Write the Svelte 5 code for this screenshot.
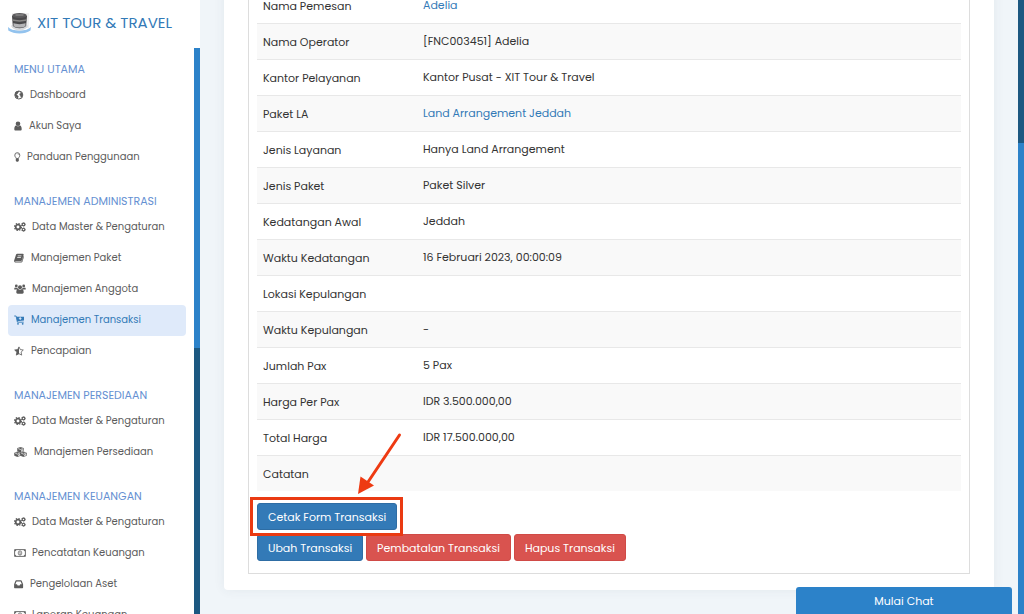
<script>
  const menu = [
    {
      title: 'MENU UTAMA',
      items: [
        { icon: 'globe', label: 'Dashboard' },
        { icon: 'user', label: 'Akun Saya' },
        { icon: 'bulb', label: 'Panduan Penggunaan' }
      ]
    },
    {
      title: 'MANAJEMEN ADMINISTRASI',
      items: [
        { icon: 'cogs', label: 'Data Master & Pengaturan' },
        { icon: 'book', label: 'Manajemen Paket' },
        { icon: 'users', label: 'Manajemen Anggota' },
        { icon: 'cart', label: 'Manajemen Transaksi', active: true },
        { icon: 'star', label: 'Pencapaian' }
      ]
    },
    {
      title: 'MANAJEMEN PERSEDIAAN',
      items: [
        { icon: 'cogs', label: 'Data Master & Pengaturan' },
        { icon: 'cubes', label: 'Manajemen Persediaan' }
      ]
    },
    {
      title: 'MANAJEMEN KEUANGAN',
      items: [
        { icon: 'cogs', label: 'Data Master & Pengaturan' },
        { icon: 'money', label: 'Pencatatan Keuangan' },
        { icon: 'inbox', label: 'Pengelolaan Aset' },
        { icon: 'money', label: 'Laporan Keuangan' }
      ]
    }
  ];

  const iconWidth = {
    globe: 10, user: 9, bulb: 7, cogs: 12, book: 11, users: 12,
    cart: 11, star: 11, cubes: 14, money: 12, inbox: 10
  };

  const rows = [
    { label: 'Nama Pemesan', value: 'Adelia', link: true },
    { label: 'Nama Operator', value: '[FNC003451] Adelia' },
    { label: 'Kantor Pelayanan', value: 'Kantor Pusat - XIT Tour & Travel' },
    { label: 'Paket LA', value: 'Land Arrangement Jeddah', link: true },
    { label: 'Jenis Layanan', value: 'Hanya Land Arrangement' },
    { label: 'Jenis Paket', value: 'Paket Silver' },
    { label: 'Kedatangan Awal', value: 'Jeddah' },
    { label: 'Waktu Kedatangan', value: '16 Februari 2023, 00:00:09' },
    { label: 'Lokasi Kepulangan', value: '' },
    { label: 'Waktu Kepulangan', value: '-' },
    { label: 'Jumlah Pax', value: '5 Pax' },
    { label: 'Harga Per Pax', value: 'IDR 3.500.000,00' },
    { label: 'Total Harga', value: 'IDR 17.500.000,00' },
    { label: 'Catatan', value: '' }
  ];
</script>

{#snippet glyph(name)}
  <svg class="icon" width={iconWidth[name]} height="10" viewBox="0 0 {iconWidth[name]} 10" aria-hidden="true">
    {#if name === 'globe'}
      <circle cx="4.8" cy="5" r="4" fill="none" stroke="currentColor" />
      <path d="M1 3.4 2.8 1.2 5 .9 5.2 2 4 2.8 3.6 4 2.4 4.5 3.8 5.4 4.6 6.4 3.8 8.6 2.2 7.6 1 5.6zM6 1.6 8 2.8 8.8 5 7.6 7.4 6.6 7.2 6.4 5.8 5.4 5 5.6 3.6 6.8 3.2z" fill="currentColor" />
    {:else if name === 'user'}
      <circle cx="4" cy="2.7" r="2.3" fill="currentColor" />
      <path d="M.3 8.2C.3 6.2.9 4.8 2.1 4.6a2.9 2.9 0 0 0 3.8 0c1.2.2 1.8 1.6 1.8 3.6 0 .9-.5 1.4-1.2 1.4h-5C.8 9.6.3 9.1.3 8.2z" fill="currentColor" />
    {:else if name === 'bulb'}
      <path d="M2.1 6.5C2.1 5.3.8 5 .8 3.2a2.5 2.5 0 0 1 5 0c0 1.8-1.3 2.1-1.3 3.3z" fill="none" stroke="currentColor" stroke-width=".9" />
      <path d="M1.8 6.9h3v2l-1 .9h-1l-1-.9zM3.2 1.7c.8 0 1.4.5 1.4 1.2h-.4c0-.5-.4-.8-1-.8z" fill="currentColor" />
    {:else if name === 'cogs'}
      <circle cx="4" cy="5" r="2.3" fill="none" stroke="currentColor" stroke-width="1.7" />
      <circle cx="4" cy="5" r="3.5" fill="none" stroke="currentColor" stroke-width="1.1" stroke-dasharray="1.45 1.3" />
      <circle cx="9.5" cy="2.4" r="1.3" fill="none" stroke="currentColor" stroke-width="1.1" />
      <circle cx="9.5" cy="2.4" r="2" fill="none" stroke="currentColor" stroke-width=".6" stroke-dasharray="1 1.1" />
      <circle cx="9.5" cy="7.6" r="1.3" fill="none" stroke="currentColor" stroke-width="1.1" />
      <circle cx="9.5" cy="7.6" r="2" fill="none" stroke="currentColor" stroke-width=".6" stroke-dasharray="1 1.1" />
    {:else if name === 'book'}
      <path fill-rule="evenodd" d="M3.3.8h5.4c.8 0 1.1.5.9 1.2L8.1 7.1c-.2.6-.6.9-1.2.9H1.6c-.5 0-.5.6.1.6h5.6c.4 0 .6-.2.7-.5l1.600-5.200c.5.300.4.700.300 1.100L8.500 8.400c-.2.700-.7 1.100-1.300 1.100H1.700C.5 9.500-.2 8.400.2 7.300L1.900 2C2.100 1.200 2.600.8 3.300.8zM3.800 2.500 3.600 3.200H7.300L7.500 2.500zM3.300 4.100 3.100 4.800H6.800L7 4.100z" fill="currentColor" />
    {:else if name === 'users'}
      <circle cx="2.3" cy="1.9" r="1.4" fill="currentColor" />
      <circle cx="9.7" cy="1.9" r="1.4" fill="currentColor" />
      <circle cx="6" cy="3.2" r="2" fill="currentColor" />
      <path d="M.2 5.400C.2 4.200.5 3.300 1.200 3.400c.8.5 1.500.5 2.300.1.100 1 .4 1.500.8 1.900H.8zM11.800 5.400c0-1.200-.3-2.100-1-2-.8.5-1.500.5-2.300.1-.1 1-.4 1.500-.8 1.900h3.500zM2.300 8.300c0-1.800.5-3.100 1.900-3.300a2.700 2.700 0 0 0 3.600 0c1.400.2 1.900 1.500 1.900 3.300 0 .9-.5 1.400-1.300 1.400H3.600c-.8 0-1.300-.5-1.300-1.400z" fill="currentColor" />
    {:else if name === 'cart'}
      <path d="M.6 1h1.500l1.300 6.200h5.900" fill="none" stroke="currentColor" stroke-width=".9" stroke-linecap="round" stroke-linejoin="round" />
      <path fill-rule="evenodd" d="M2.300 1.700H10v3.800L3.200 6.300zM5.600 2.300v1H4.500L6.200 5l1.700-1.700H6.800v-1z" fill="currentColor" />
      <circle cx="4" cy="8.8" r=".9" fill="currentColor" />
      <circle cx="8.7" cy="8.8" r=".9" fill="currentColor" />
    {:else if name === 'star'}
      <path d="M5 .9 6.300 3.600l3 .4-2.200 2.100.6 3L5 7.700 2.300 9.100l.6-3L.7 4l3-.4z" fill="none" stroke="currentColor" stroke-width=".8" stroke-linejoin="round" />
      <path d="M5 .9v6.800L2.300 9.100l.6-3L.7 4l3-.4z" fill="currentColor" />
    {:else if name === 'cubes'}
      <g fill="currentColor" stroke="currentColor" stroke-width=".5" stroke-linejoin="round">
        <path d="M3.500 1.300 6.500.3l3 1v2.900l-3 1.200-3-1.200zM.5 5.900l3-1 3 1v2.600l-3 1.200-3-1.200zM6.500 5.900l3-1 3 1v2.600l-3 1.200-3-1.200z" />
      </g>
      <path d="M4.200 1.600 6.500 2.500 8.800 1.600M1.200 6.200l2.300.9 2.300-.9M7.200 6.200l2.300.9 2.300-.9M7.500 3.300 8.900 2.700V3.800l-1.400.6zM4.500 7.900l1.300-.5V8.200l-1.300.5zM10.500 7.900l1.300-.5V8.200l-1.300.5z" fill="none" stroke="#fff" stroke-width=".7" />
    {:else if name === 'money'}
      <path d="M.6 1.600h10.800v6.800H.6z" fill="none" stroke="currentColor" stroke-width=".9" />
      <path d="M1 2h1.500L1 3.500zM11 2H9.500L11 3.500zM1 8h1.500L1 6.500zM11 8H9.500L11 6.500z" fill="currentColor" />
      <ellipse cx="6" cy="5" rx="1.8" ry="2.2" fill="none" stroke="currentColor" stroke-width=".7" />
      <path d="M5.300 4.200 6.100 3.700v2.500M5.300 6.300h1.500" fill="none" stroke="currentColor" stroke-width=".6" />
    {:else if name === 'inbox'}
      <path fill-rule="evenodd" d="M2.200 1.200h4.800c.4 0 .6.200.7.500L9.100 5.300v3.300c0 .4-.2.600-.6.600H.7c-.4 0-.6-.2-.6-.6V5.300L1.500 1.700c.1-.3.3-.5.7-.5zM2.500 2.400 1.400 5.300H3l.6 1.200h2L6.200 5.300h1.600L6.700 2.400z" fill="currentColor" />
    {/if}
  </svg>
{/snippet}

<div class="shell">
  <aside class="sidebar">
    <a class="brand" href="#home">
      <svg width="24" height="22" viewBox="0 0 24 22" aria-hidden="true">
        <path d="M4 1h17v15H4z" fill="#f1f0f0" />
        <path d="M0 15C2 17.500 6 18.500 11.500 18.500S20.500 17.500 23 15l-.5 3.500C19.500 20.500 16 21.500 11.500 21.500S3.500 20.500.3 18.500z" fill="#93c3ee" />
        <path d="M3 13.500C4 17 8 18.500 11.500 18.500S19 17 20 13.500z" fill="#d8dadd" />
        <path d="M4 4 4.800 13.500c1.500 3.500 11.900 3.500 13.400 0L19 4z" fill="#4a494b" />
        <ellipse cx="11.500" cy="3.500" rx="7.300" ry="2.600" fill="#5c5b5d" />
        <path d="M4.300 7c3.500 1.500 11 1.500 14.400 0v1.500c-3.500 1.500-11 1.500-14.300 0z" fill="#8b8987" />
        <path d="M5.500 11c2.500 1.500 9.500 1.500 12 0v3c-2.500 2-9.500 2-12 0z" fill="#b5b5b7" />
        <path d="M7.500 3h8" stroke="#999" />
      </svg>
      <span>XIT TOUR &amp; TRAVEL</span>
    </a>
    <div class="scroller">
      <nav aria-label="Menu">
        {#each menu as group}
          <section>
            <h2>{group.title}</h2>
            <ul>
              {#each group.items as item}
                <li>
                  <a href="#menu" class:active={item.active}>
                    {@render glyph(item.icon)}
                    <span>{item.label}</span>
                  </a>
                </li>
              {/each}
            </ul>
          </section>
        {/each}
      </nav>
      <div class="rail"><div class="thumb side-thumb"></div></div>
    </div>
  </aside>

  <main>
    <div class="card">
      <div class="panel">
        <table>
          <tbody>
            {#each rows as row}
              <tr>
                <th scope="row">{row.label}</th>
                <td>
                  {#if row.link}<a href="#detail">{row.value}</a>{:else}{row.value}{/if}
                </td>
              </tr>
            {/each}
          </tbody>
        </table>
        <div class="actions">
          <div class="line">
            <div class="marked">
              <button class="btn primary">Cetak Form Transaksi</button>
              <div class="frame"></div>
              <svg class="arrow" width="48" height="64" viewBox="0 0 48 64" aria-hidden="true">
                <path d="M43.500 4 12 51" stroke="#ee3a12" stroke-width="3" stroke-linecap="round" />
                <path d="M2 63 4.500 45.500 18 54.500z" fill="#ee3a12" />
              </svg>
            </div>
          </div>
          <div class="line">
            <button class="btn primary">Ubah Transaksi</button>
            <button class="btn danger">Pembatalan Transaksi</button>
            <button class="btn danger">Hapus Transaksi</button>
          </div>
        </div>
      </div>
    </div>
    <button class="chat">Mulai Chat</button>
  </main>

  <div class="rail page-rail"><div class="thumb"></div></div>
</div>

<style>
  :global(body) {
    margin: 0;
  }
  .shell {
    display: grid;
    grid-template-columns: 200px 1fr 6px;
    height: 100vh;
    overflow: hidden;
    background: #f0f5f9;
    color: #333;
    font: 11px/18px Poppins, Inter, sans-serif;
  }
  a {
    color: #337ab7;
    text-decoration: none;
  }
  .sidebar {
    display: flex;
    flex-direction: column;
    min-height: 0;
    background: #fff;
  }
  .brand {
    display: flex;
    flex: none;
    align-items: center;
    gap: 5px;
    height: 45px;
    padding: 0 8px;
    margin-bottom: 3px;
    font-size: 15px;
    white-space: nowrap;
  }
  .scroller {
    display: flex;
    flex: 1;
    min-height: 0;
  }
  nav {
    flex: 1;
    min-width: 0;
    padding: 10px 8px 0;
    overflow: hidden;
  }
  section {
    margin-bottom: 17px;
  }
  h2 {
    margin: 0;
    padding-left: 6px;
    color: #6590d2;
    font-size: 11px;
    font-weight: 400;
    line-height: 22px;
    white-space: nowrap;
  }
  ul {
    margin: 0;
    padding: 0;
    list-style: none;
  }
  li a {
    display: flex;
    align-items: center;
    gap: 6px;
    height: 29px;
    padding: 0 0 2px 6px;
    border-radius: 4px;
    color: #5c5c5c;
    font-size: 10px;
    white-space: nowrap;
  }
  li a.active {
    background: #dfeafa;
    color: #337ab7;
  }
  .icon {
    flex: none;
  }
  .rail {
    flex: none;
    width: 6px;
    background: #1c5881;
  }
  .thumb {
    height: 100%;
    background: #2c82c9;
  }
  .side-thumb {
    height: 53%;
  }
  .page-rail {
    padding-top: 143px;
  }
  main {
    position: relative;
    min-width: 0;
    padding: 0 24px;
  }
  .card {
    margin-top: -13px;
    padding: 0 24px 16px;
    border-radius: 4px;
    background: #fff;
    box-shadow: 0 0 12px rgba(60, 70, 90, 0.07);
  }
  .panel {
    padding: 0 8px 12px;
    border: 1px solid #ddd;
    border-top: 0;
  }
  table {
    width: 100%;
    border-collapse: separate;
    border-spacing: 0;
    table-layout: fixed;
  }
  th,
  td {
    height: 35px;
    padding: 0 6px;
    border-top: 1px solid #e8e8e8;
    font-weight: 400;
    text-align: left;
  }
  th {
    width: 148px;
  }
  td {
    height: 33px;
    padding-bottom: 2px;
  }
  tr:nth-child(even) {
    background: #f9f9f9;
  }
  .actions {
    display: grid;
    gap: 4px;
    padding-top: 12px;
  }
  .line {
    display: flex;
    gap: 3px;
  }
  .btn {
    height: 27px;
    padding: 0 10px;
    border: 1px solid #2e6da4;
    border-radius: 3px;
    background: #337ab7;
    color: #fff;
    font: inherit;
    white-space: nowrap;
  }
  .danger {
    border-color: #d04a46;
    background: #d9534f;
  }
  .marked {
    position: relative;
    z-index: 1;
  }
  .marked .btn {
    display: block;
  }
  .frame {
    position: absolute;
    inset: -6px -6px -6px -7px;
    border: 3px solid #ea3a12;
    pointer-events: none;
  }
  .arrow {
    position: absolute;
    left: 99px;
    bottom: 35px;
    fill: none;
    pointer-events: none;
  }
  .chat {
    position: absolute;
    right: 6px;
    bottom: 0;
    width: 216px;
    height: 27px;
    padding: 0;
    border: 0;
    border-radius: 3px 3px 0 0;
    background: #2c82c9;
    color: #fff;
    font: inherit;
  }
</style>
